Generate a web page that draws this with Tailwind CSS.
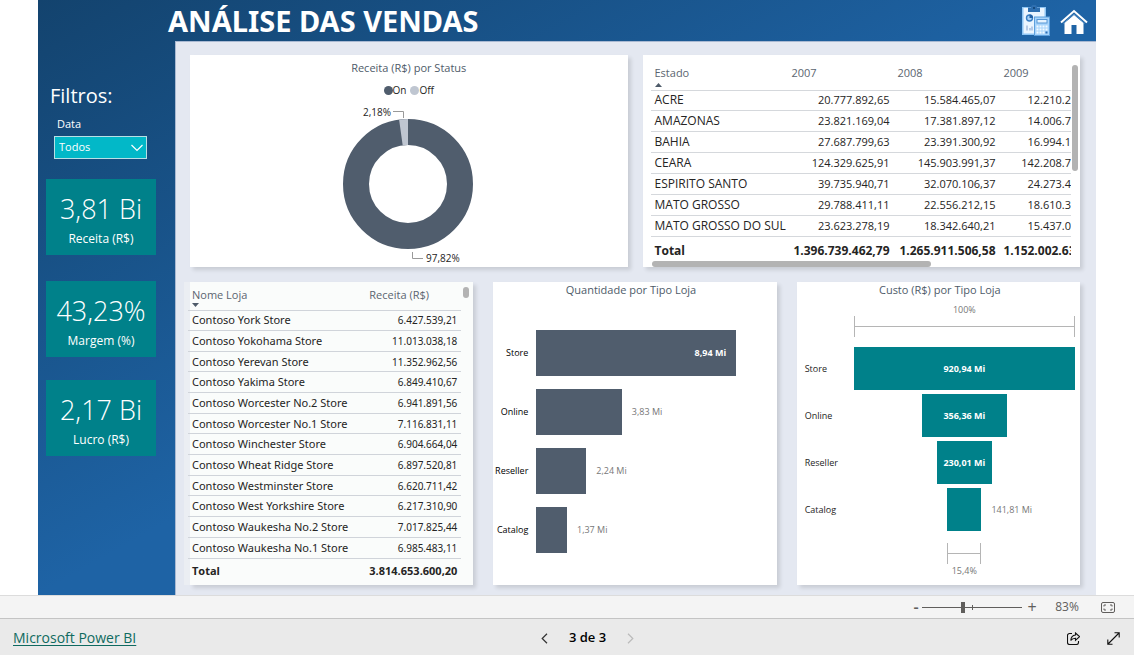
<!DOCTYPE html>
<html lang="pt-BR">
<head>
<meta charset="utf-8">
<meta name="viewport" content="width=device-width, initial-scale=1">
<title>Análise das Vendas</title>
<script src="https://cdn.jsdelivr.net/npm/@tailwindcss/browser@4"></script>
</head>
<body class="flex min-h-screen flex-col bg-white font-['Open_Sans','Noto_Sans',sans-serif] text-[#252423]">

<main class="mx-[38px] flex flex-1 flex-col bg-linear-to-br from-[#13436e] via-[#1e63a5] to-[#1e63a5]">
  <header class="flex h-[41px] items-center justify-between pr-2 pl-[130px]">
    <h1 class="font-['Noto_Sans','Open_Sans',sans-serif] text-[29px] leading-8 font-bold whitespace-nowrap text-white">ANÁLISE DAS VENDAS</h1>
    <nav class="flex items-center gap-2">
      <a href="#relatorio" aria-label="Relatório">
        <svg class="h-8 w-[30px]" viewBox="0 0 30 32">
          <rect x="0" y="2" width="24" height="28" fill="#8ec5f4"/>
          <rect x="1.500" y="3" width="21" height="25.500" fill="#eaf5ff"/>
          <path d="M6 2.500h3a3 2.800 0 0 1 6 0h3v4.500H6z" fill="#2e6fb0"/>
          <circle cx="12" cy="3" r="1" fill="#0f3e6e"/>
          <circle cx="7.500" cy="13" r="3" fill="#a9d2f8" stroke="#3b7fc4" stroke-width="1.400"/>
          <path d="M7.500 13v-3.500a3.500 3.500 0 0 1 3.500 3.500z" fill="#2463a6"/>
          <path d="M5 20.500v5M8 23v2.500M10 21.500v4" stroke="#a5bde0" stroke-width="1.500"/>
          <rect x="12.500" y="12" width="15" height="18.500" fill="#a8d4fb" stroke="#5d9fdc"/>
          <rect x="15" y="14.500" width="10" height="3.500" fill="#e5f3ff" stroke="#5797d5"/>
          <path d="M14.500 21.500h11M14.500 24.500h11M14.500 27.500h8" stroke="#f3faff" stroke-width="2" stroke-dasharray="2 1"/>
          <path d="M23.500 27.500h2" stroke="#2d6fb4" stroke-width="2"/>
        </svg>
      </a>
      <a href="#inicio" aria-label="Início">
        <svg class="h-8 w-7" viewBox="0 0 28 32">
          <path d="M4.500 18L14 10l9.500 8v11h-7v-9h-5v9h-7z" fill="#fff"/>
          <path d="M1 17.500L14 6l13 11.500" fill="none" stroke="#fff" stroke-width="2"/>
          <path d="M3 18.500L14 9l11 9.500" fill="none" stroke="#4d8ac4" stroke-width="1"/>
        </svg>
      </a>
    </nav>
  </header>

  <div class="flex flex-1">
    <aside class="w-[137px] shrink-0 px-2 pt-[39px] text-white">
      <h2 class="pl-1 text-xl leading-8">Filtros:</h2>
      <label for="data" class="block pt-0.5 pl-[11px] text-[11px] leading-5">Data</label>
      <div class="relative mt-0.5 ml-2 w-[93px]">
        <select id="data" class="block h-[23px] w-full appearance-none border border-[#b8e0e6] bg-[#02b8c8] pl-1 text-[11px] text-white">
          <option>Todos</option>
        </select>
        <svg class="pointer-events-none absolute top-2 right-1 h-[9px] w-3" viewBox="0 0 12 9" fill="none" stroke="#fff" stroke-width="1.200"><path d="M.5 1L6 6.500 11.500 1"/></svg>
      </div>
      <section class="mt-5 flex h-[76px] w-[110px] flex-col items-center bg-[#00818a] pt-[10px]">
        <p class="text-[27px] leading-10 font-light whitespace-nowrap">3,81 Bi</p>
        <h3 class="text-xs leading-5">Receita (R$)</h3>
      </section>
      <section class="mt-[26px] flex h-[76px] w-[110px] flex-col items-center bg-[#00818a] pt-[10px]">
        <p class="text-[27px] leading-10 font-light whitespace-nowrap">43,23%</p>
        <h3 class="text-xs leading-5">Margem (%)</h3>
      </section>
      <section class="mt-[23px] flex h-[76px] w-[110px] flex-col items-center bg-[#00818a] pt-[10px]">
        <p class="text-[27px] leading-10 font-light whitespace-nowrap">2,17 Bi</p>
        <h3 class="text-xs leading-5">Lucro (R$)</h3>
      </section>
    </aside>

    <div class="flex min-w-0 flex-1 flex-col gap-[15px] border-t border-l border-[#a9b9d2] bg-[#e4e8f1] pt-[13px] pr-4 pb-[10px] pl-[14px]">
      <div class="grid flex-[212] grid-cols-2 gap-[15px]">
        <!-- Receita por status -->
        <section class="flex flex-col items-center bg-white pt-[3px] shadow-[3px_3px_4px_rgba(0,0,0,0.12)]">
          <h2 class="text-[11px] leading-5 text-[#4e5b69]">Receita (R$) por Status</h2>
          <ul class="mt-px flex h-[22px] items-center gap-1 text-[10px]">
            <li class="flex items-center"><span class="size-[9px] rounded-full bg-[#505d6d]"></span>On</li>
            <li class="flex items-center"><span class="size-[9px] rounded-full bg-[#bfc6d1]"></span>Off</li>
          </ul>
          <svg class="h-[165px] w-[200px]" viewBox="0 0 200 165" role="img" aria-label="On 97,82%, Off 2,18%">
            <circle cx="99" cy="83" r="52" fill="none" stroke="#505d6d" stroke-width="26"/>
            <path d="M99 18V44A39 39 0 0 0 93.700 44.400L90.100 18.600A65 65 0 0 1 99 18Z" fill="#bfc6d1"/>
            <path d="M84 10.500h10.500V17M103.500 151v6.500H114" fill="none" stroke="#999"/>
            <text x="54" y="15" font-size="10" fill="#252423">2,18%</text>
            <text x="117" y="161" font-size="10" fill="#252423">97,82%</text>
          </svg>
        </section>

        <!-- Receita por estado e ano -->
        <section class="relative bg-white pt-2 pr-[9px] pl-2 shadow-[3px_3px_4px_rgba(0,0,0,0.12)]">
          <div class="overflow-hidden">
          <table class="h-[200px] w-full table-fixed border-collapse text-xs leading-4 whitespace-nowrap">
            <colgroup><col class="w-[137px]"><col class="w-[106px]"><col class="w-[106px]"><col></colgroup>
            <thead>
              <tr class="h-[27px] border-b border-[#d5d8dc] text-left text-[11px] text-[#5b6570]">
                <th class="px-1 pt-0.5 align-top font-normal" aria-sort="ascending">Estado
                  <svg class="mt-0.5 h-1 w-[7px]" viewBox="0 0 7 4"><path d="M0 4l3.500-4L7 4z" fill="#4e5b69"/></svg></th>
                <th class="px-1 pt-0.5 align-top font-normal">2007</th>
                <th class="px-1 pt-0.5 align-top font-normal">2008</th>
                <th class="px-1 pt-0.5 align-top font-normal">2009</th>
              </tr>
            </thead>
            <tbody>
              <tr class="border-b border-[#d5d8dc]"><td class="px-1">ACRE</td><td class="px-1 text-right text-[11px]">20.777.892,65</td><td class="px-1 text-right text-[11px]">15.584.465,07</td><td class="text-right text-[11px]">12.210.2</td></tr>
              <tr class="border-b border-[#d5d8dc]"><td class="px-1">AMAZONAS</td><td class="px-1 text-right text-[11px]">23.821.169,04</td><td class="px-1 text-right text-[11px]">17.381.897,12</td><td class="text-right text-[11px]">14.006.7</td></tr>
              <tr class="border-b border-[#d5d8dc]"><td class="px-1">BAHIA</td><td class="px-1 text-right text-[11px]">27.687.799,63</td><td class="px-1 text-right text-[11px]">23.391.300,92</td><td class="text-right text-[11px]">16.994.1</td></tr>
              <tr class="border-b border-[#d5d8dc]"><td class="px-1">CEARA</td><td class="px-1 text-right text-[11px]">124.329.625,91</td><td class="px-1 text-right text-[11px]">145.903.991,37</td><td class="text-right text-[11px]">142.208.7</td></tr>
              <tr class="border-b border-[#d5d8dc]"><td class="px-1">ESPIRITO SANTO</td><td class="px-1 text-right text-[11px]">39.735.940,71</td><td class="px-1 text-right text-[11px]">32.070.106,37</td><td class="text-right text-[11px]">24.273.4</td></tr>
              <tr class="border-b border-[#d5d8dc]"><td class="px-1">MATO GROSSO</td><td class="px-1 text-right text-[11px]">29.788.411,11</td><td class="px-1 text-right text-[11px]">22.556.212,15</td><td class="text-right text-[11px]">18.610.3</td></tr>
              <tr class="border-b border-[#d5d8dc]"><td class="px-1">MATO GROSSO DO SUL</td><td class="px-1 text-right text-[11px]">23.623.278,19</td><td class="px-1 text-right text-[11px]">18.342.640,21</td><td class="text-right text-[11px]">15.437.0</td></tr>
            </tbody>
            <tfoot>
              <tr class="h-[27px] font-bold"><td class="px-1 pt-0.5">Total</td><td class="px-1 pt-0.5 text-right">1.396.739.462,79</td><td class="px-1 pt-0.5 text-right">1.265.911.506,58</td><td class="overflow-hidden pt-0.5 pl-1">1.152.002.63</td></tr>
            </tfoot>
          </table>
          </div>
          <div class="absolute top-[10px] right-0.5 h-[106px] w-1.5 rounded-full bg-[#b3b3b3]"></div>
          <div class="absolute bottom-0 left-[9px] h-1.5 w-[279px] rounded-full bg-[#b3b3b3]"></div>
        </section>
      </div>

      <div class="grid flex-[303] grid-cols-3 gap-5">
        <!-- Receita por loja -->
        <section class="relative bg-[#fafcfb] shadow-[3px_3px_4px_rgba(0,0,0,0.12)]">
          <div class="absolute top-0 -left-1.5 h-full w-1.5 bg-[#ebeef3]"></div>
          <div class="relative -ml-0.5 pr-3">
          <table class="h-[301px] w-full table-fixed border-collapse text-xs leading-4 whitespace-nowrap">
            <colgroup><col><col class="w-24"></colgroup>
            <thead>
              <tr class="h-7 border-b border-[#d0d4da] text-left text-[11px] text-[#5b6570]">
                <th class="px-1 pt-[5px] align-top font-normal" aria-sort="descending">Nome Loja
                  <svg class="h-1 w-[7px]" viewBox="0 0 7 4"><path d="M0 0l3.500 4L7 0z" fill="#4e5b69"/></svg></th>
                <th class="px-1 pt-[5px] align-top font-normal">Receita (R$)</th>
              </tr>
            </thead>
            <tbody class="font-['Noto_Sans','Open_Sans',sans-serif] text-[11px]">
              <tr class="border-b border-[#d0d4da]"><td class="px-1">Contoso York Store</td><td class="px-1 text-right text-[10px]">6.427.539,21</td></tr>
              <tr class="border-b border-[#d0d4da]"><td class="px-1">Contoso Yokohama Store</td><td class="px-1 text-right text-[10px]">11.013.038,18</td></tr>
              <tr class="border-b border-[#d0d4da]"><td class="px-1">Contoso Yerevan Store</td><td class="px-1 text-right text-[10px]">11.352.962,56</td></tr>
              <tr class="border-b border-[#d0d4da]"><td class="px-1">Contoso Yakima Store</td><td class="px-1 text-right text-[10px]">6.849.410,67</td></tr>
              <tr class="border-b border-[#d0d4da]"><td class="px-1">Contoso Worcester No.2 Store</td><td class="px-1 text-right text-[10px]">6.941.891,56</td></tr>
              <tr class="border-b border-[#d0d4da]"><td class="px-1">Contoso Worcester No.1 Store</td><td class="px-1 text-right text-[10px]">7.116.831,11</td></tr>
              <tr class="border-b border-[#d0d4da]"><td class="px-1">Contoso Winchester Store</td><td class="px-1 text-right text-[10px]">6.904.664,04</td></tr>
              <tr class="border-b border-[#d0d4da]"><td class="px-1">Contoso Wheat Ridge Store</td><td class="px-1 text-right text-[10px]">6.897.520,81</td></tr>
              <tr class="border-b border-[#d0d4da]"><td class="px-1">Contoso Westminster Store</td><td class="px-1 text-right text-[10px]">6.620.711,42</td></tr>
              <tr class="border-b border-[#d0d4da]"><td class="px-1">Contoso West Yorkshire Store</td><td class="px-1 text-right text-[10px]">6.217.310,90</td></tr>
              <tr class="border-b border-[#d0d4da]"><td class="px-1">Contoso Waukesha No.2 Store</td><td class="px-1 text-right text-[10px]">7.017.825,44</td></tr>
              <tr class="border-b border-[#d0d4da]"><td class="px-1">Contoso Waukesha No.1 Store</td><td class="px-1 text-right text-[10px]">6.985.483,11</td></tr>
            </tbody>
            <tfoot>
              <tr class="h-[25px] text-[11px] font-bold"><td class="px-1">Total</td><td class="px-1 text-right">3.814.653.600,20</td></tr>
            </tfoot>
          </table>
          </div>
          <div class="absolute top-[5px] right-1 h-[11px] w-1.5 rounded-full bg-[#b3b3b3]"></div>
        </section>

        <!-- Quantidade por tipo de loja -->
        <section class="bg-white pr-2 shadow-[3px_3px_4px_rgba(0,0,0,0.12)]">
          <h2 class="text-center text-[11px] leading-4 text-[#4e5b69]">Quantidade por Tipo Loja</h2>
          <div class="mt-8 flex flex-col gap-[13px] text-[9px]">
            <div class="flex h-[46px] items-center gap-2"><span class="w-[35px] shrink-0 text-right text-black">Store</span>
              <div class="flex h-full flex-1 items-center"><div class="flex h-full items-center justify-end bg-[#505d6d] pr-2.5 font-bold text-white" style="width:86%">8,94 Mi</div></div></div>
            <div class="flex h-[46px] items-center gap-2"><span class="w-[35px] shrink-0 text-right text-black">Online</span>
              <div class="flex h-full flex-1 items-center gap-2.5 text-[#777]"><div class="h-full bg-[#505d6d]" style="width:36.8%"></div>3,83 Mi</div></div>
            <div class="flex h-[46px] items-center gap-2"><span class="w-[35px] shrink-0 text-right text-black">Reseller</span>
              <div class="flex h-full flex-1 items-center gap-2.5 text-[#777]"><div class="h-full bg-[#505d6d]" style="width:21.5%"></div>2,24 Mi</div></div>
            <div class="flex h-[46px] items-center gap-2"><span class="w-[35px] shrink-0 text-right text-black">Catalog</span>
              <div class="flex h-full flex-1 items-center gap-2.5 text-[#777]"><div class="h-full bg-[#505d6d]" style="width:13.2%"></div>1,37 Mi</div></div>
          </div>
        </section>

        <!-- Custo por tipo de loja -->
        <section class="bg-white pr-[5px] pl-2 shadow-[3px_3px_4px_rgba(0,0,0,0.12)]">
          <h2 class="text-center text-[11px] leading-4 text-[#4e5b69]">Custo (R$) por Tipo Loja</h2>
          <div class="ml-[49px] flex flex-col items-center pt-1.5 text-[9px] leading-3 text-[#777]">
            <span>100%</span>
            <div class="flex h-[21px] w-full items-center border-x border-[#b5b5b5]"><div class="h-px w-full bg-[#b5b5b5]"></div></div>
          </div>
          <div class="mt-[10px] flex flex-col gap-1 text-[9px]">
            <div class="flex h-[43px] items-center"><span class="w-[49px] shrink-0">Store</span>
              <div class="flex h-full flex-1 items-center justify-center"><div class="flex h-full items-center justify-center bg-[#00818a] font-bold whitespace-nowrap text-white" style="width:100%">920,94 Mi</div></div></div>
            <div class="flex h-[43px] items-center"><span class="w-[49px] shrink-0">Online</span>
              <div class="flex h-full flex-1 items-center justify-center"><div class="flex h-full items-center justify-center bg-[#00818a] font-bold whitespace-nowrap text-white" style="width:38.7%">356,36 Mi</div></div></div>
            <div class="flex h-[43px] items-center"><span class="w-[49px] shrink-0">Reseller</span>
              <div class="flex h-full flex-1 items-center justify-center"><div class="flex h-full items-center justify-center bg-[#00818a] font-bold whitespace-nowrap text-white" style="width:25%">230,01 Mi</div></div></div>
            <div class="flex h-[43px] items-center"><span class="w-[49px] shrink-0">Catalog</span>
              <div class="flex h-full flex-1 items-center"><div class="flex-1"></div><div class="h-full bg-[#00818a]" style="width:15.4%"></div><div class="flex-1 text-[#777]"><span class="ml-2.5">141,81 Mi</span></div></div></div>
          </div>
          <div class="ml-[49px] flex flex-col items-center pt-3 text-[9px] leading-3 text-[#777]">
            <div class="flex h-[21px] items-center border-x border-[#b5b5b5]" style="width:15.4%"><div class="h-px w-full bg-[#b5b5b5]"></div></div>
            <span class="pt-px">15,4%</span>
          </div>
        </section>
      </div>
    </div>
  </div>
</main>

<div class="flex h-[23px] items-center justify-end border-t border-[#dcdcdc] bg-[#f4f4f4] pr-[19px] text-xs text-[#605e5c]">
  <button type="button" class="w-3 text-base leading-4 font-semibold" aria-label="Reduzir">-</button>
  <div class="relative flex w-[100px] items-center">
    <div class="absolute left-1/2 h-[5px] w-px bg-[#605e5c]"></div>
    <input type="range" min="0" max="100" value="41" aria-label="Zoom" class="relative block h-[11px] w-full appearance-none bg-transparent [&::-webkit-slider-runnable-track]:h-px [&::-webkit-slider-runnable-track]:bg-[#605e5c] [&::-webkit-slider-thumb]:-mt-[5px] [&::-webkit-slider-thumb]:h-[11px] [&::-webkit-slider-thumb]:w-1 [&::-webkit-slider-thumb]:appearance-none [&::-webkit-slider-thumb]:bg-[#605e5c]">
  </div>
  <button type="button" class="w-5 text-base leading-4" aria-label="Ampliar">+</button>
  <span class="w-[50px] text-center text-xs">83%</span>
  <button type="button" class="ml-[9px]" aria-label="Ajustar à página">
    <svg class="h-[11px] w-[14px]" viewBox="0 0 14 11" fill="none" stroke="#605e5c"><rect x=".5" y=".5" width="13" height="10" rx="1.500"/><path d="M3 4.500V3h2M9 3h2v1.500M11 6.500V8H9M5 8H3V6.500"/></svg>
  </button>
</div>

<footer class="grid h-[37px] grid-cols-3 items-center border-t border-[#c4c4c4] bg-[#eaeaea] pt-0.5 pr-[14px] pl-[13px]">
  <a href="#powerbi" class="justify-self-start text-sm text-[#0f6a60] underline underline-offset-2">Microsoft Power BI</a>
  <div class="flex items-center justify-center gap-[21px] pl-[42px] text-[13px] font-semibold text-black">
    <button type="button" aria-label="Página anterior"><svg class="h-[11px] w-[7px]" viewBox="0 0 7 11" fill="none" stroke="#333" stroke-width="1.200"><path d="M6 .8L1.200 5.500 6 10.200"/></svg></button>
    <span>3 de 3</span>
    <button type="button" disabled aria-label="Próxima página"><svg class="h-[11px] w-[7px]" viewBox="0 0 7 11" fill="none" stroke="#bbb" stroke-width="1.200"><path d="M1 .8l4.800 4.700L1 10.200"/></svg></button>
  </div>
  <div class="flex items-center gap-[27px] justify-self-end">
    <button type="button" aria-label="Compartilhar"><svg class="h-[13px] w-[13px]" viewBox="0 0 13 13" fill="none" stroke="#111" stroke-width="1.100"><path d="M5 1.500H2.500a2 2 0 0 0-2 2v7a2 2 0 0 0 2 2h7a2 2 0 0 0 2-2V9"/><path d="M8.500 1v2C5.500 3.200 4 5.200 3.800 8.500 5 6.600 6.500 6.200 8.500 6.200v2.100l4-3.700z"/></svg></button>
    <button type="button" aria-label="Tela cheia"><svg class="h-[13px] w-[13px]" viewBox="0 0 13 13" fill="none" stroke="#111" stroke-width="1.100"><path d="M1 12L12 1M7.500.8h4.700v4.700M.8 7.500v4.700h4.700"/></svg></button>
  </div>
</footer>
</body>
</html>
